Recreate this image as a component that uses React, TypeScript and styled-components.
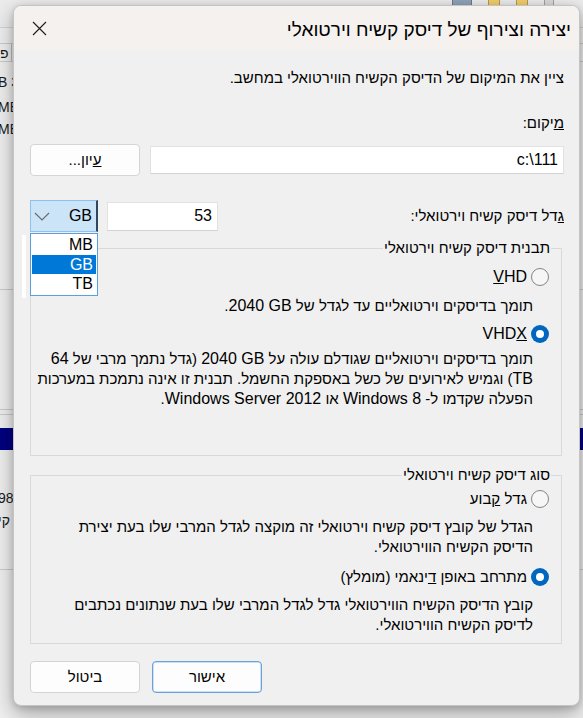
import React from "react";
import styled, { createGlobalStyle, css } from "styled-components";

const Global = createGlobalStyle`
  html, body { margin: 0; padding: 0; }
  body {
    width: 583px; height: 718px; overflow: hidden;
    background: #d6d6d6;
    font-family: "Liberation Sans", "DejaVu Sans", Arial, sans-serif;
    color: #000;
  }
  #root { width: 583px; height: 718px; }
`;

/* ---------- desktop + window behind ---------- */

const Desktop = styled.div`
  position: relative;
  width: 583px;
  height: 718px;
  overflow: hidden;
`;

const BackWindow = styled.div`
  display: flex;
  flex-direction: column;
  width: 100%;
  height: 100%;
  background: #f0f0f0;
  font-size: 14px;
  line-height: 16px;
`;

const BackToolbar = styled.div`
  flex: none;
  height: 28px;
  box-sizing: border-box;
  background: #ececec;
  border-bottom: 1px solid #d4d4d4;
  display: flex;
  align-items: flex-start;
  padding-left: 452px;
  gap: 16px;
`;

const ToolIcon = styled.span<{ $color: string; $w?: number }>`
  width: ${(p) => p.$w ?? 12}px;
  height: 16px;
  margin-top: -10px;
  background: ${(p) => p.$color};
  border: 1px solid rgba(0, 0, 0, 0.25);
  border-radius: 2px;
`;

const BackRow = styled.div<{ $h: number; $mt?: number; $top?: boolean; $bottom?: boolean; $bg?: string }>`
  flex: none;
  height: ${(p) => p.$h}px;
  margin-top: ${(p) => p.$mt ?? 0}px;
  box-sizing: border-box;
  display: flex;
  align-items: center;
  white-space: nowrap;
  color: #1a1a1a;
  background: ${(p) => p.$bg ?? "transparent"};
  ${(p) => p.$top && "border-top: 1px solid #cdcdcd;"}
  ${(p) => p.$bottom && "border-bottom: 1px solid #cdcdcd;"}
`;

const BackCellText = styled.span`
  margin-left: -2px;
`;

const HeaderCell = styled.span`
  width: 12px;
  height: 100%;
  box-sizing: border-box;
  border-right: 1px solid #bdbdbd;
  display: flex;
  align-items: center;
  overflow: hidden;
`;

/* ---------- dialog ---------- */

const Dialog = styled.div`
  position: absolute;
  left: 13px;
  top: 5px;
  width: 567px;
  height: 701px;
  box-sizing: border-box;
  display: flex;
  flex-direction: column;
  background: #f0f0f0;
  border: 1px solid #c4c4c4;
  border-radius: 8px;
  overflow: hidden;
  box-shadow: 0 8px 22px rgba(0, 0, 0, 0.32), 0 2px 6px rgba(0, 0, 0, 0.15);
`;

const TitleBar = styled.div`
  flex: none;
  height: 44px;
  display: flex;
  align-items: center;
  justify-content: space-between;
  padding: 0 8px 0 0;
  background: #f5f1ef;
`;

const Title = styled.div`
  font-size: 19px;
  line-height: 24px;
  padding-top: 3px;
  color: #000;
  white-space: nowrap;
`;

const CloseButton = styled.div`
  width: 46px;
  height: 44px;
  display: flex;
  align-items: center;
  justify-content: center;
  margin-left: 2px;
`;

const Body = styled.div`
  flex: 1;
  display: flex;
  flex-direction: column;
  padding: 0 15px 0 16px;
  font-size: 15px;
  line-height: 20px;
`;

const Latin = styled.span<{ $iso?: boolean }>`
  font-size: 16px;
  ${(p) =>
    p.$iso &&
    css`
      unicode-bidi: isolate;
      direction: ltr;
    `}
`;

const Text = styled.div<{ $mt?: number }>`
  margin-top: ${(p) => p.$mt ?? 0}px;
  white-space: nowrap;
`;

const Row = styled.div<{ $mt: number; $h: number }>`
  margin-top: ${(p) => p.$mt}px;
  height: ${(p) => p.$h}px;
  display: flex;
  align-items: center;
  justify-content: space-between;
`;

const Cluster = styled.div<{ $gap: number }>`
  display: flex;
  align-items: center;
  gap: ${(p) => p.$gap}px;
`;

const Field = styled.div<{ $w: number; $h: number }>`
  width: ${(p) => p.$w}px;
  height: ${(p) => p.$h}px;
  box-sizing: border-box;
  background: #fff;
  border: 1px solid #e2e2e2;
  border-bottom-color: #d2d2d2;
  display: flex;
  align-items: center;
  padding: 0 5px;
  direction: ltr;
  justify-content: flex-end;
  font-size: 16px;
`;

const PushButton = styled.div<{ $primary?: boolean }>`
  width: 110px;
  height: 32px;
  box-sizing: border-box;
  border-radius: 4px;
  background: #fdfdfd;
  border: 1px solid ${(p) => (p.$primary ? "#6aa3dc" : "#d4d4d4")};
  ${(p) => p.$primary && "box-shadow: inset 0 0 0 0.5px #9cc3ea;"}
  display: flex;
  align-items: center;
  justify-content: center;
  color: #000;
`;

const ComboWrap = styled.div`
  position: relative;
  width: 68px;
  height: 32px;
`;

const Combo = styled.div`
  width: 100%;
  height: 100%;
  box-sizing: border-box;
  background: #cce4f7;
  border: 1px solid #8fc1ec;
  border-right: 2px solid #2f4860;
  display: flex;
  align-items: center;
  justify-content: space-between;
  padding: 0 4px 0 3px;
  font-size: 16px;
`;

const DropList = styled.div`
  position: absolute;
  top: 33px;
  left: 0;
  width: 68px;
  box-sizing: border-box;
  background: #fff;
  border: 1px solid #5c9fe0;
  padding: 1px 1px;
  z-index: 2;
  font-size: 16px;
`;

const DropItem = styled.div<{ $sel?: boolean }>`
  height: 19.5px;
  line-height: 19px;
  padding: 0 3px;
  text-align: right;
  direction: ltr;
  ${(p) =>
    p.$sel &&
    css`
      background: #0078d7;
      color: #fff;
    `}
`;

const ShadowStrip = styled.div`
  position: absolute;
  top: 35px;
  left: -8px;
  width: 4px;
  height: 63px;
  background: #fff;
`;

const Group = styled.fieldset<{ $mt: number; $pb: number }>`
  margin: ${(p) => p.$mt}px 2px 0 0;
  padding: 0 10px ${(p) => p.$pb}px 10px;
  border: 1px solid #d9d9d9;
  min-width: 0;
  display: flex;
  flex-direction: column;
`;

const Legend = styled.legend`
  padding: 0 1px;
  line-height: 20px;
  font-size: 15px;
`;

const RadioRow = styled.div<{ $mt: number }>`
  margin-top: ${(p) => p.$mt}px;
  margin-right: 2px;
  height: 20px;
  display: flex;
  align-items: center;
  gap: 4px;
`;

const RadioDot = styled.span<{ $on?: boolean }>`
  flex: none;
  width: 18px;
  height: 18px;
  box-sizing: border-box;
  border-radius: 50%;
  display: flex;
  align-items: center;
  justify-content: center;
  ${(p) =>
    p.$on
      ? css`
          background: #0067c0;
          &::after {
            content: "";
            width: 8px;
            height: 8px;
            border-radius: 50%;
            background: #fff;
          }
        `
      : css`
          border: 1px solid #858585;
          background: #f6f6f6;
        `}
`;

const Desc = styled.div<{ $mt: number }>`
  margin-top: ${(p) => p.$mt}px;
  margin-right: 18px;
  display: flex;
  flex-direction: column;
`;

const DescLine = styled.div`
  white-space: nowrap;
  height: 20px;
`;

const ButtonRow = styled.div`
  margin-top: 17px;
  display: flex;
  justify-content: flex-end;
  gap: 12px;
`;

const CloseIcon = () => (
  <svg width="15" height="15" viewBox="0 0 15 15">
    <path d="M1 1 L14 14 M14 1 L1 14" stroke="#1b1b1b" strokeWidth="1.1" fill="none" />
  </svg>
);

const Chevron = () => (
  <svg width="16" height="9" viewBox="0 0 16 9">
    <polyline points="1,1 8,8 15,1" stroke="#6b6b6b" strokeWidth="1.2" fill="none" />
  </svg>
);

export default function App() {
  return (
    <Desktop>
      <Global />
      <BackWindow>
        <BackToolbar>
          <ToolIcon $color="#8fa3b8" $w={18} />
          <ToolIcon $color="#f2cf6b" $w={10} />
          <ToolIcon $color="#f2cf6b" $w={10} />
          <ToolIcon $color="#d9d9d9" $w={8} />
        </BackToolbar>
        <BackRow $h={15} />
        <BackRow $h={19} $top $bottom>
          <HeaderCell>פ</HeaderCell>
        </BackRow>
        <BackRow $h={22} $mt={9}>
          <BackCellText>B 3</BackCellText>
        </BackRow>
        <BackRow $h={28}>
          <BackCellText>MB</BackCellText>
        </BackRow>
        <BackRow $h={16}>
          <BackCellText>MB</BackCellText>
        </BackRow>
        <BackRow $h={153} $bottom />
        <BackRow $h={120} $bottom />
        <BackRow $h={5} $bottom />
        <BackRow $h={13} />
        <BackRow $h={22} $bg="#000080" />
        <BackRow $h={38} />
        <BackRow $h={20}>
          <BackCellText>98</BackCellText>
        </BackRow>
        <BackRow $h={23}>
          <BackCellText>קי</BackCellText>
        </BackRow>
        <BackRow $h={39} $bottom />
      </BackWindow>

      <Dialog dir="rtl">
        <TitleBar>
          <Title>יצירה וצירוף של דיסק קשיח וירטואלי</Title>
          <CloseButton>
            <CloseIcon />
          </CloseButton>
        </TitleBar>
        <Body>
          <Text $mt={18}>ציין את המיקום של הדיסק הקשיח הווירטואלי במחשב.</Text>
          <Text $mt={25}>
            <u>מ</u>יקום:
          </Text>
          <Row $mt={11} $h={31}>
            <Field $w={414} $h={28}>c:\111</Field>
            <PushButton>
              <span>
                <u>ע</u>יון...
              </span>
            </PushButton>
          </Row>
          <Row $mt={25} $h={32}>
            <Text>
              <u>ג</u>דל דיסק קשיח וירטואלי:
            </Text>
            <Cluster $gap={9}>
              <Field $w={111} $h={29}>53</Field>
              <ComboWrap>
                <Combo>
                  <span>GB</span>
                  <Chevron />
                </Combo>
                <ShadowStrip />
                <DropList>
                  <DropItem>MB</DropItem>
                  <DropItem $sel>GB</DropItem>
                  <DropItem>TB</DropItem>
                </DropList>
              </ComboWrap>
            </Cluster>
          </Row>

          <Group $mt={6} $pb={46}>
            <Legend>תבנית דיסק קשיח וירטואלי</Legend>
            <RadioRow $mt={9}>
              <RadioDot />
              <Latin>
                <u>V</u>HD
              </Latin>
            </RadioRow>
            <Desc $mt={9}>
              <DescLine>
                תומך בדיסקים וירטואליים עד לגדל של <Latin $iso>2040 GB</Latin>.
              </DescLine>
            </Desc>
            <RadioRow $mt={8}>
              <RadioDot $on />
              <Latin>
                VHD<u>X</u>
              </Latin>
            </RadioRow>
            <Desc $mt={5}>
              <DescLine>
                תומך בדיסקים וירטואליים שגודלם עולה על <Latin $iso>2040 GB</Latin> (גדל נתמך מרבי של{" "}
                <Latin>64</Latin>
              </DescLine>
              <DescLine>
                <Latin>TB</Latin>) וגמיש לאירועים של כשל באספקת החשמל. תבנית זו אינה נתמכת במערכות
              </DescLine>
              <DescLine>
                הפעלה שקדמו ל-  <Latin>Windows 8</Latin> או <Latin>Windows Server 2012</Latin>.
              </DescLine>
            </Desc>
          </Group>

          <Group $mt={9} $pb={8}>
            <Legend>סוג דיסק קשיח וירטואלי</Legend>
            <RadioRow $mt={4}>
              <RadioDot />
              <span>
                גדל <u>ק</u>בוע
              </span>
            </RadioRow>
            <Desc $mt={8}>
              <DescLine>הגדל של קובץ דיסק קשיח וירטואלי זה מוקצה לגדל המרבי שלו בעת יצירת</DescLine>
              <DescLine>הדיסק הקשיח הווירטואלי.</DescLine>
            </Desc>
            <RadioRow $mt={10}>
              <RadioDot $on />
              <span>
                מתרחב באופן <u>ד</u>ינאמי (מומלץ)
              </span>
            </RadioRow>
            <Desc $mt={8}>
              <DescLine>קובץ הדיסק הקשיח הווירטואלי גדל לגדל המרבי שלו בעת שנתונים נכתבים</DescLine>
              <DescLine>לדיסק הקשיח הווירטואלי.</DescLine>
            </Desc>
          </Group>

          <ButtonRow>
            <PushButton $primary>אישור</PushButton>
            <PushButton>ביטול</PushButton>
          </ButtonRow>
        </Body>
      </Dialog>
    </Desktop>
  );
}
